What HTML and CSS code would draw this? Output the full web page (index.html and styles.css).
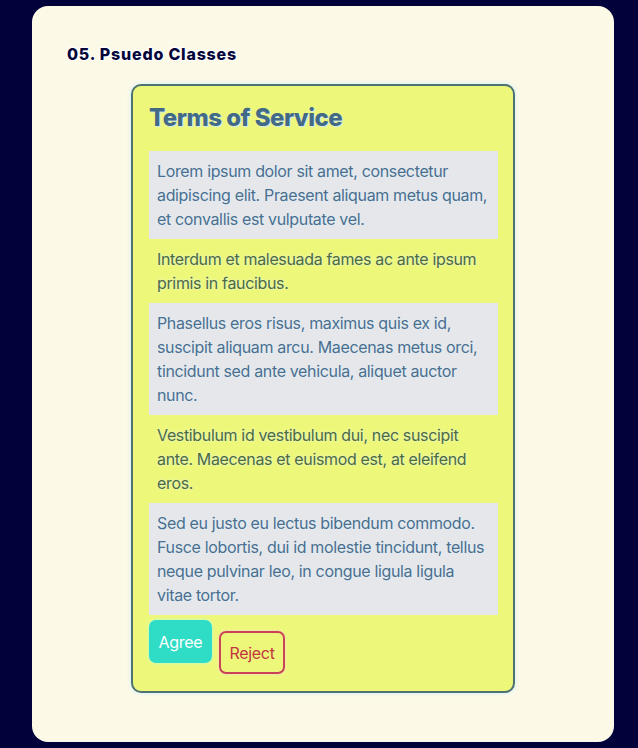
FILE: index.html
```html
<!DOCTYPE html>
<html lang="en">
<head>
<meta charset="utf-8">
<title>Pseudo Classes</title>
<link rel="stylesheet" href="styles.css">
</head>
<body>
<main class="panel">
  <h2 class="section-title">05. Psuedo Classes</h2>
  <section class="card">
    <h1 class="card-title">Terms of Service</h1>
    <p class="term">Lorem ipsum dolor sit amet, consectetur adipiscing elit. Praesent aliquam metus quam, et convallis est vulputate vel.</p>
    <p class="term">Interdum et malesuada fames ac ante ipsum primis in faucibus.</p>
    <p class="term">Phasellus eros risus, maximus quis ex id, suscipit aliquam arcu. Maecenas metus orci, tincidunt sed ante vehicula, aliquet auctor nunc.</p>
    <p class="term">Vestibulum id vestibulum dui, nec suscipit ante. Maecenas et euismod est, at eleifend eros.</p>
    <p class="term">Sed eu justo eu lectus bibendum commodo. Fusce lobortis, dui id molestie tincidunt, tellus neque pulvinar leo, in congue ligula ligula vitae tortor.</p>
    <div class="actions">
      <button class="btn btn-agree">Agree</button>
      <button class="btn btn-reject">Reject</button>
    </div>
  </section>
</main>
</body>
</html>
```
FILE: styles.css
```css
* { box-sizing: border-box; }
html, body { margin: 0; padding: 0; }
body {
  background: #02023a;
  font-family: Inter, "Liberation Sans", sans-serif;
  padding: 6px 24px 6px 32px;
  min-height: 748px;
}
.panel {
  background: #fcf9e7;
  border-radius: 16px;
  height: 736px;
  padding: 38px 35px 0 35px;
  display: flex;
  flex-direction: column;
}
.section-title {
  margin: 0 0 20px 0;
  font-size: 16px;
  line-height: 20px;
  font-weight: 800;
  letter-spacing: 0.8px;
  color: #05063a;
  text-shadow: 1px 1px 0 #fff, -1px -1px 0 #fff, 1px -1px 0 #fff, -1px 1px 0 #fff;
}
.card {
  align-self: center;
  width: 384px;
  background: #edf87b;
  border: 2px solid #4f7272;
  border-radius: 10px;
  padding: 16px 15px 17px 16px;
  box-shadow: 0 0 4px rgba(200, 240, 255, 0.9);
}
.card-title {
  margin: 0 0 17px 0;
  font-size: 24px;
  line-height: 32px;
  font-weight: 800;
  letter-spacing: -0.5px;
  color: #436a84;
  text-shadow: 1px 1px 1px #cfeaf5;
}
.term {
  margin: 0;
  padding: 8px;
  font-size: 16px;
  line-height: 24px;
  letter-spacing: -0.35px;
  color: #4b6f8d;
  text-shadow: 0 0 2px #dff2ff;
}
.term:nth-child(even) { background: #e5e7eb; }
.term:nth-child(odd) { color: #4e6b3c; }
.actions {
  display: flex;
  align-items: flex-start;
  gap: 7px;
  padding-top: 5px;
}
.btn {
  font-family: inherit;
  font-size: 16px;
  line-height: 24px;
  height: 43px;
  border-radius: 7px;
  cursor: pointer;
  letter-spacing: -0.3px;
}
.btn-agree {
  background: #2fdcc6;
  color: #fff;
  border: 0;
  padding: 0 8px;
  width: 63px;
  font-weight: 400;
  box-shadow: 0 0 3px #b0fff0;
}
.btn-reject {
  margin-top: 11px;
  background: transparent;
  color: #c2353e;
  border: 2px solid #c94458;
  padding: 0 6px;
  width: 66px;
  box-shadow: 0 0 3px #ffd0dc;
}
```
